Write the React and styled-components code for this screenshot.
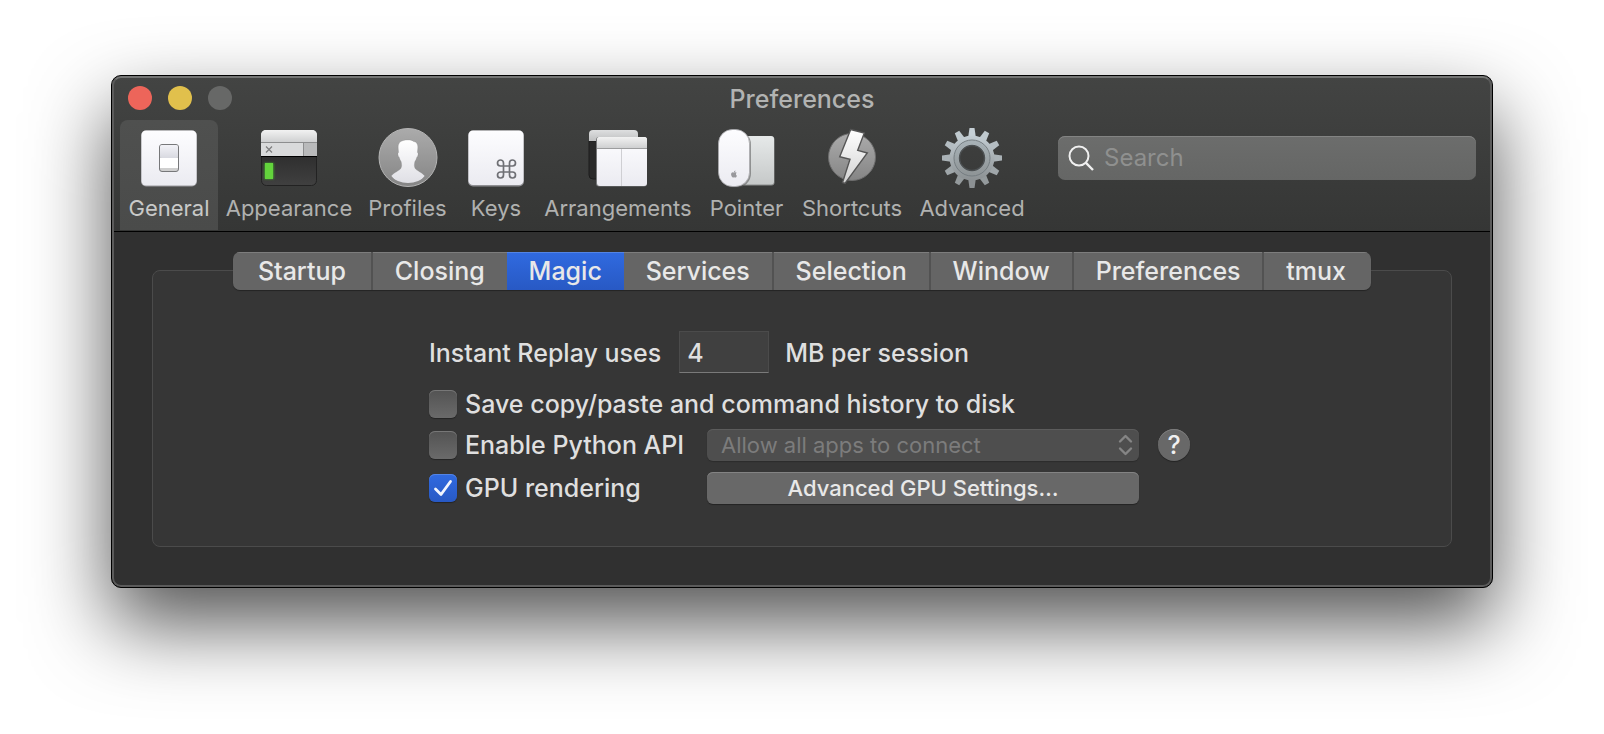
import React, { useState } from 'react';
import styled, { createGlobalStyle, css } from 'styled-components';
import { FaApple } from 'react-icons/fa';

const GlobalStyle = createGlobalStyle`
  *, *::before, *::after { box-sizing: border-box; }
  body {
    margin: 0;
    background: #fff;
    font-family: Inter, "Liberation Sans", sans-serif;
    font-size: 25px;
    font-weight: 500;
    line-height: 32px;
    color: #dfdfdf;
  }
  button, input, select { font: inherit; color: inherit; margin: 0; }
`;

const Desktop = styled.div`
  padding: 75px 111px 147px;
`;

const Window = styled.main`
  position: relative;
  border: 1px solid #000;
  border-radius: 10px;
  background: #303030;
  box-shadow: 0 36px 80px rgba(0, 0, 0, 0.68);
  overflow: hidden;

  &::after {
    content: '';
    position: absolute;
    inset: 0;
    border: 2px solid #5b5b5b;
    border-top-color: #747574;
    border-radius: 9px;
    pointer-events: none;
  }
`;

const Header = styled.header`
  background: linear-gradient(#434443, #353635);
  border-bottom: 1px solid #000;
  padding-bottom: 1px;
`;

const TitleBar = styled.div`
  display: grid;
  grid-template-columns: 1fr auto 1fr;
  align-items: center;
  height: 44px;
  padding: 0 16px;
`;

const Lights = styled.div`
  display: flex;
  gap: 16px;
`;

const Light = styled.button`
  width: 24px;
  height: 24px;
  padding: 0;
  border: 0;
  border-radius: 50%;
  background: ${(p) => p.$color};
`;

const Title = styled.h1`
  margin: 0;
  padding-top: 2px;
  font-size: 25px;
  font-weight: 500;
  color: #b2b3b2;
`;

const Toolbar = styled.div`
  display: flex;
  padding: 0 16px 0 8px;
`;

const ToolNav = styled.nav`
  display: flex;
`;

const ToolButton = styled.button`
  display: flex;
  flex-direction: column;
  align-items: center;
  gap: 5px;
  min-width: ${(p) => p.$width}px;
  padding: 8px 4px 7px;
  border: 0;
  border-radius: 8px 8px 0 0;
  background: ${(p) => (p.$active ? 'linear-gradient(#4f504f, #4a4b4a)' : 'none')};
  color: ${(p) => (p.$active ? '#c8c9c8' : '#b0b1b0')};
  font-size: 22px;
  font-weight: 400;
  line-height: 30px;
  white-space: nowrap;

  svg { display: block; }
`;

const SearchBox = styled.label`
  display: flex;
  align-items: center;
  gap: 10px;
  width: 418px;
  height: 44px;
  margin: 16px 0 0 auto;
  padding: 0 10px;
  border-radius: 7px;
  background: linear-gradient(#6c6d6c, #656665);
  box-shadow: inset 0 1px 0 #838483;
  color: #f0f0f0;
`;

const SearchInput = styled.input`
  flex: 1;
  min-width: 0;
  padding: 0;
  border: 0;
  outline: 0;
  background: none;
  font-size: 24px;
  font-weight: 400;
  &::placeholder { color: #8f908f; opacity: 1; }
`;

const Content = styled.div`
  padding: 20px 40px 40px;
`;

const TabBar = styled.div`
  position: relative;
  z-index: 1;
  display: flex;
  max-width: 1138px;
  margin: 0 auto;
  border-radius: 7px;
  box-shadow: 0 1px 1px rgba(0, 0, 0, 0.35);
  overflow: hidden;
`;

const Tab = styled.button`
  flex: 1 1 auto;
  height: 38px;
  padding: 0 21px;
  border: 0;
  border-left: ${(p) => (p.$divided ? '2px solid #525252' : '0')};
  background: #656565;
  box-shadow: inset 0 1px 0 #7d7d7d;
  color: #e8e8e8;
  white-space: nowrap;

  &:first-child { padding: 0 24px; }
  &:last-child { padding-right: 24px; }

  ${(p) => p.$active && css`
    background: linear-gradient(#306ae0, #2859c4);
    box-shadow: inset 0 1px 0 #5384e4;
  `}
`;

const Panel = styled.section`
  margin-top: -20px;
  padding: 60px 20px 42px;
  border: 1px solid #4b4b4b;
  border-radius: 8px;
  background: #363636;
`;

const Form = styled.form`
  display: flex;
  flex-direction: column;
  gap: 10px;
  max-width: 776px;
  margin: 0 auto;
  padding-left: 15px;
`;

const ReplayRow = styled.div`
  display: flex;
  align-items: center;
  margin-bottom: 7px;

  label, span { padding-top: 2px; }
`;

const NumberInput = styled.input`
  width: 90px;
  height: 42px;
  margin: 0 16px 0 18px;
  padding: 2px 7px 0;
  border: 1px solid #4b4b4b;
  border-bottom: 1px solid #7a7a7a;
  border-radius: 0;
  outline: 0;
  background: #404040;
`;

const Row = styled.div`
  display: grid;
  grid-template-columns: 278px minmax(0, 432px) 32px;
  align-items: center;
  min-height: ${(p) => (p.$tall ? '33px' : '28px')};
`;

const CheckLabel = styled.label`
  display: flex;
  align-items: center;
  gap: 8px;
  height: 28px;
  grid-column: ${(p) => (p.$wide ? '1 / -1' : 'auto')};
  white-space: nowrap;
`;

const CheckCell = styled.span`
  display: grid;
  width: 28px;
  height: 28px;
  > * { grid-area: 1 / 1; }
  svg { pointer-events: none; visibility: hidden; }
  input:checked + svg { visibility: visible; }
`;

const CheckInput = styled.input`
  appearance: none;
  width: 28px;
  height: 28px;
  border-radius: 6px;
  background: linear-gradient(#535353, #6a6a6a);
  box-shadow: inset 0 1px 0 #777, 0 1px 1px rgba(0, 0, 0, 0.35);

  &:checked {
    background: linear-gradient(#306ae0, #2859c4);
    box-shadow: inset 0 1px 0 #5384e4, 0 1px 1px rgba(0, 0, 0, 0.35);
  }
`;

const SelectCell = styled.div`
  display: grid;
  align-items: center;
  > * { grid-area: 1 / 1; }
  svg { justify-self: end; margin-right: 6px; pointer-events: none; }
`;

const Select = styled.select`
  appearance: none;
  width: 100%;
  height: 32px;
  padding: 0 32px 0 14px;
  border: 0;
  border-radius: 6px;
  background: #4e4e4e;
  box-shadow: inset 0 1px 0 #5c5c5c, 0 1px 1px rgba(0, 0, 0, 0.2);
  font-size: 22px;
  font-weight: 400;
  &:disabled { color: #7c7c7c; opacity: 1; }
`;

const PushButton = styled.button`
  width: 100%;
  height: 32px;
  padding: 0;
  border: 0;
  border-radius: 6px;
  background: #686868;
  box-shadow: inset 0 1px 0 #838383, 0 1px 1px rgba(0, 0, 0, 0.35);
  color: #e8e8e8;
  font-size: 22px;
`;

const HelpButton = styled.button`
  width: 32px;
  height: 32px;
  margin-left: 19px;
  padding: 0;
  border: 0;
  border-radius: 50%;
  background: #686868;
  box-shadow: inset 0 1px 0 #7d7d7d, 0 1px 1px rgba(0, 0, 0, 0.35);
  color: #f0f0f0;
`;

function Icon({ children }) {
  return (
    <svg width="60" height="60" viewBox="0 0 60 60" aria-hidden="true">
      {children}
    </svg>
  );
}

const DefsSvg = styled.svg`
  display: block;
`;

function Gradients() {
  const stops = {
    paper: ['#fdfdff', '#ebebf1'],
    chrome: ['#f2f2f2', '#cfd0d1'],
    chromeBack: ['#dedfe0', '#bfc0c1'],
    terminal: ['#202020', '#404040'],
    disc: ['#ababab', '#858585'],
    bolt: ['#ffffff', '#d2d2d2'],
    bust: ['#ffffff', '#dedee4'],
    pad: ['#e6e9e9', '#c6c9c9'],
    steel: ['#c3cdd3', '#8b9092'],
    ring: ['#a7b1b6', '#909698'],
    toggle: ['#f3f3f8', '#d8d9e0'],
  };
  return (
    <DefsSvg width="0" height="0" aria-hidden="true">
      <defs>
        {Object.entries(stops).map(([id, [from, to]]) => (
          <linearGradient key={id} id={id} x1="0" y1="0" x2="0" y2="1">
            <stop offset="0" stopColor={from} />
            <stop offset="1" stopColor={to} />
          </linearGradient>
        ))}
        <filter id="glow" x="-60%" y="-40%" width="220%" height="180%">
          <feGaussianBlur stdDeviation="1.3" />
        </filter>
        <clipPath id="discClip"><circle cx="30" cy="28.5" r="26.5" /></clipPath>
      </defs>
    </DefsSvg>
  );
}

const GeneralIcon = () => (
  <Icon>
    <rect x="2" y="2.5" width="56" height="56" rx="5" fill="#9a9a9e" />
    <rect x="2.5" y="2.5" width="55" height="55" rx="4.5" fill="url(#paper)" />
    <rect x="20.5" y="16.5" width="19" height="27" rx="2.5" fill="#cfcfcf" stroke="#77787a" />
    <rect x="21" y="17" width="18" height="13" rx="2" fill="url(#toggle)" />
    <rect x="21" y="30" width="18" height="10" fill="#fff" />
  </Icon>
);

const AppearanceIcon = () => (
  <Icon>
    <rect x="2.5" y="2.5" width="55" height="55" rx="5" fill="url(#terminal)" stroke="#222" />
    <path d="M2 28V7a5 5 0 0 1 5-5h46a5 5 0 0 1 5 5v21z" fill="#d9dadb" />
    <path d="M2 14V7a5 5 0 0 1 5-5h46a5 5 0 0 1 5 5v7z" fill="url(#chrome)" />
    <rect x="44" y="14" width="14" height="14" fill="#b9babb" />
    <path d="M2 14.5h56M44.5 14v14" stroke="#8d8e8f" fill="none" />
    <path d="M7 18.5l6 6M13 18.5l-6 6" stroke="#7c7d7e" strokeWidth="1.2" />
    <path d="M2 28.5h56" stroke="#000" />
    <rect x="5.5" y="35" width="9" height="16" fill="#4ce02c" filter="url(#glow)" opacity="0.7" />
    <rect x="6" y="35" width="8" height="16" fill="#63d43c" />
  </Icon>
);

const ProfilesIcon = () => (
  <Icon>
    <circle cx="30" cy="29.5" r="29" fill="url(#disc)" stroke="#b4b4b4" />
    <path
      clipPath="url(#discClip)"
      d="M30 12c3 0 4.500 .6 5.500 1.500c3 .3 4.300 2.500 4.300 5.500c0 2-.4 4-.4 5.500c1.200.3 .8 3.300-.6 4.800c-.4 1.600-1 3.100-2 4.400c-.5 2.500-.8 4.800.4 6.800c1.500 2.400 6.500 3.500 9.600 7.500c-4 5-9.800 9-16.800 9s-12.800-4-16.800-9c3.100-4 8.100-5.100 9.600-7.500c1.200-2 .9-4.300.4-6.800c-1-1.300-1.600-2.800-2-4.400c-1.400-1.500-1.800-4.500-.6-4.800c0-1.500-.4-3.500-.4-5.500c0-4.500 3-7 9.800-7z"
      fill="url(#bust)"
      stroke="#77777755"
      strokeWidth="0.6"
    />
  </Icon>
);

const KeysIcon = () => (
  <Icon>
    <rect x="2" y="2.5" width="56" height="56" rx="5" fill="#8f8f93" />
    <rect x="2.5" y="2.5" width="55" height="54.5" rx="4.5" fill="url(#paper)" />
    <path
      transform="translate(28.5 29)"
      d="M15 6v12a3 3 0 1 0 3-3H6a3 3 0 1 0 3 3V6a3 3 0 1 0-3 3h12a3 3 0 1 0-3-3"
      fill="none"
      stroke="#6f7075"
      strokeWidth="1.7"
    />
  </Icon>
);

const ArrangementsIcon = () => (
  <Icon>
    <path d="M1 13h20v38H5a4 4 0 0 1-4-4z" fill="#2a2a2a" stroke="#1c1c1c" />
    <path d="M1 13V6a4 4 0 0 1 4-4h41a4 4 0 0 1 4 4v7z" fill="url(#chromeBack)" />
    <rect x="8" y="9" width="51" height="49.5" rx="3" fill="#77787a" />
    <rect x="9" y="9" width="50" height="49" rx="3" fill="url(#paper)" />
    <path d="M9 20v-8a3 3 0 0 1 3-3h44a3 3 0 0 1 3 3v8z" fill="url(#chrome)" />
    <path d="M9 20.5h50" stroke="#9c9d9e" />
    <path d="M33.5 21v37" stroke="#cfcfd3" />
  </Icon>
);

const PointerIcon = () => (
  <Icon>
    <rect x="20" y="8.5" width="37.5" height="49" rx="3" fill="#8b8d8d" />
    <rect x="20" y="8" width="37" height="48.5" rx="3" fill="url(#pad)" />
    <rect x="2" y="2.5" width="32" height="57" rx="14" fill="#55555588" />
    <rect x="1.5" y="1.5" width="31" height="57" rx="14" fill="url(#paper)" stroke="#a9a9ad" strokeWidth="0.8" />
    <FaApple x="13" y="42" size={8} color="#98989c" />
  </Icon>
);

const ShortcutsIcon = () => (
  <Icon>
    <circle cx="30" cy="29" r="23.5" fill="url(#disc)" stroke="#6d6d6d" />
    <path
      d="M28.7 1.5L42.3 5L35.7 22.3L45.3 25L23 55.5L20.5 54.5L28 31.3L17.7 28.7z"
      fill="url(#bolt)"
      stroke="#555"
      strokeWidth="1.4"
    />
  </Icon>
);

const TOOTH_FILLS = [
  '#c6d0d6', '#bfc9ce', '#b4bdc2', '#aab2b6', '#9fa6a9', '#949a9c',
  '#8c9193', '#949a9c', '#9fa6a9', '#aab2b6', '#b4bdc2', '#bfc9ce',
];

const AdvancedIcon = () => (
  <Icon>
    {TOOTH_FILLS.map((fill, i) => (
      <path key={i} d="M27.5 0h5l1.300 9h-7.600z" fill={fill} transform={`rotate(${i * 30} 30 30)`} />
    ))}
    <path
      fill="url(#steel)"
      fillRule="evenodd"
      d="M30 7.500a22.500 22.500 0 1 0 0 45a22.500 22.500 0 1 0 0-45zM30 17.500a12.500 12.500 0 1 1 0 25a12.500 12.500 0 1 1 0-25z"
    />
    <circle cx="30" cy="30" r="15.5" fill="none" stroke="url(#ring)" strokeWidth="4" />
    <circle cx="30" cy="30" r="18" fill="none" stroke="#747c80" />
    <circle cx="30" cy="30" r="12.5" fill="none" stroke="#4c5052" strokeWidth="1.5" />
  </Icon>
);

const TOOLS = [
  ['General', GeneralIcon, 98],
  ['Appearance', AppearanceIcon, 142],
  ['Profiles', ProfilesIcon, 95],
  ['Keys', KeysIcon, 82],
  ['Arrangements', ArrangementsIcon, 162],
  ['Pointer', PointerIcon, 95],
  ['Shortcuts', ShortcutsIcon, 116],
  ['Advanced', AdvancedIcon, 124],
];

const TABS = ['Startup', 'Closing', 'Magic', 'Services', 'Selection', 'Window', 'Preferences', 'tmux'];

function Checkbox({ label, defaultChecked, wide }) {
  return (
    <CheckLabel $wide={wide}>
      <CheckCell>
        <CheckInput type="checkbox" defaultChecked={defaultChecked} />
        <svg width="28" height="28" viewBox="0 0 28 28" aria-hidden="true">
          <path d="M6.500 15l5.500 5.500L21.500 7.500" fill="none" stroke="#f2f5fd" strokeWidth="2.8" strokeLinecap="round" strokeLinejoin="round" />
        </svg>
      </CheckCell>
      {label}
    </CheckLabel>
  );
}

export default function App() {
  const [tool, setTool] = useState('General');
  const [tab, setTab] = useState('Magic');
  const active = TABS.indexOf(tab);

  return (
    <Desktop>
      <GlobalStyle />
      <Gradients />
      <Window>
        <Header>
          <TitleBar>
            <Lights>
              <Light $color="#ed655a" aria-label="Close" />
              <Light $color="#e1c04c" aria-label="Minimize" />
              <Light $color="#676867" aria-label="Zoom" disabled />
            </Lights>
            <Title>Preferences</Title>
          </TitleBar>
          <Toolbar>
            <ToolNav>
              {TOOLS.map(([name, Glyph, width]) => (
                <ToolButton key={name} type="button" $width={width} $active={name === tool} onClick={() => setTool(name)}>
                  <Glyph />
                  {name}
                </ToolButton>
              ))}
            </ToolNav>
            <SearchBox>
              <svg width="26" height="28" viewBox="0 0 26 28" aria-hidden="true" fill="none" stroke="currentColor" strokeWidth="2">
                <circle cx="11" cy="12" r="9.5" />
                <path d="M17.700 18.700l7.300 7.300" strokeWidth="2.4" />
              </svg>
              <SearchInput type="text" placeholder="Search" aria-label="Search" />
            </SearchBox>
          </Toolbar>
        </Header>
        <Content>
          <TabBar role="tablist">
            {TABS.map((name, i) => (
              <Tab
                key={name}
                type="button"
                role="tab"
                aria-selected={i === active}
                $active={i === active}
                $divided={i > 0 && i !== active && i !== active + 1}
                onClick={() => setTab(name)}
              >
                {name}
              </Tab>
            ))}
          </TabBar>
          <Panel>
            <Form onSubmit={(e) => e.preventDefault()}>
              <ReplayRow>
                <label htmlFor="replay">Instant Replay uses</label>
                <NumberInput id="replay" type="text" defaultValue="4" />
                <span>MB per session</span>
              </ReplayRow>
              <Row>
                <Checkbox wide label="Save copy/paste and command history to disk" />
              </Row>
              <Row $tall>
                <Checkbox label="Enable Python API" />
                <SelectCell>
                  <Select disabled aria-label="Python API access">
                    <option>Allow all apps to connect</option>
                  </Select>
                  <svg width="15" height="22" viewBox="0 0 15 22" fill="none" stroke="#858585" strokeWidth="2.4" strokeLinecap="round" strokeLinejoin="round" aria-hidden="true">
                    <path d="M2 7.500L7.500 2L13 7.500M2 14.500L7.500 20L13 14.500" />
                  </svg>
                </SelectCell>
                <HelpButton type="button" aria-label="Help">?</HelpButton>
              </Row>
              <Row $tall>
                <Checkbox label="GPU rendering" defaultChecked />
                <PushButton type="button">Advanced GPU Settings…</PushButton>
              </Row>
            </Form>
          </Panel>
        </Content>
      </Window>
    </Desktop>
  );
}
